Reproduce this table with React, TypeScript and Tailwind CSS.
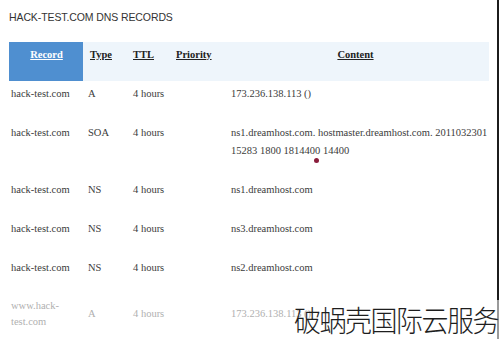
import React from 'react';

type Row = { record: string[]; type: string; ttl: string; content: string[]; faded?: boolean };

const rows: Row[] = [
    { record: ['hack-test.com'], type: 'A', ttl: '4 hours', content: ['173.236.138.113 ()'] },
    {
        record: ['hack-test.com'],
        type: 'SOA',
        ttl: '4 hours',
        content: ['ns1.dreamhost.com. hostmaster.dreamhost.com. 2011032301', '15283 1800 1814400 14400'],
    },
    { record: ['hack-test.com'], type: 'NS', ttl: '4 hours', content: ['ns1.dreamhost.com'] },
    { record: ['hack-test.com'], type: 'NS', ttl: '4 hours', content: ['ns3.dreamhost.com'] },
    { record: ['hack-test.com'], type: 'NS', ttl: '4 hours', content: ['ns2.dreamhost.com'] },
    { record: ['www.hack-', 'test.com'], type: 'A', ttl: '4 hours', content: ['173.236.138.113 ()'], faded: true },
];

const serif = { fontFamily: '"Liberation Serif", "Times New Roman", serif' };

const App = () => {
    return (
        <div className="relative w-[500px] h-[339px] overflow-hidden bg-white flex">
            <div className="flex-1 pl-[9px] pt-[10px]">
                <h1
                    className="text-[10.5px] leading-[14px] text-[#333] tracking-[-0.1px]"
                    style={{ fontFamily: '"Liberation Sans", Arial, sans-serif' }}
                >
                    HACK-TEST.COM DNS RECORDS
                </h1>
                <table className="mt-[18px] border-collapse text-[10.5px] text-[#3b3b3b]" style={serif}>
                    <thead>
                        <tr className="bg-[#eef5fb] h-[39px]">
                            <th className="w-[74px] bg-[#4f8fd0] text-white font-bold underline text-center pb-[14px] pl-[1px]">
                                Record
                            </th>
                            <th className="w-[45px] text-left font-bold underline pl-[7px] pb-[14px] text-[#222]">Type</th>
                            <th className="w-[42px] text-left font-bold underline pl-[5px] pb-[14px] text-[#222]">TTL</th>
                            <th className="w-[52px] text-left font-bold underline pl-[6px] pb-[14px] text-[#222]">Priority</th>
                            <th className="w-[267px] text-center font-bold underline pb-[14px] text-[#222]">Content</th>
                        </tr>
                    </thead>
                    <tbody>
                        {rows.map((r, i) => {
                            const cell = r.faded ? 'align-top pt-[11px]' : 'align-top pt-[4px] pb-[17px]';
                            return (
                                <tr key={i} className={r.faded ? 'text-[#b0b0b0]' : ''}>
                                    <td className={`align-top pt-[4px] pb-[17px] pl-[2px] ${r.faded ? 'leading-[16px]' : 'leading-[18px]'}`}>
                                        {r.record.map((l, j) => (
                                            <div key={j}>{l}</div>
                                        ))}
                                    </td>
                                    <td className={`pl-[5px] leading-[18px] ${cell}`}>{r.type}</td>
                                    <td className={`pl-[5px] leading-[18px] ${cell}`}>{r.ttl}</td>
                                    <td />
                                    <td className={`pl-[9px] leading-[18px] ${cell}`}>
                                        {r.content.map((l, j) => (
                                            <div key={j} className="whitespace-nowrap">{l}</div>
                                        ))}
                                    </td>
                                </tr>
                            );
                        })}
                    </tbody>
                </table>
            </div>
            <div className="w-[2px] mr-[1px] flex flex-col">
                <div className="h-[300px] bg-[#1c1c1c]" />
                <div className="flex-1 bg-[#9a9a9a]" />
            </div>

            <span className="absolute left-[314px] top-[158px] w-[5px] h-[5px] rounded-full bg-[#8a1d3c]" />
            <div
                className="absolute left-[294px] top-[302px] text-[27px] leading-[34px] text-[#1e1e1e] tracking-[-1.5px] whitespace-nowrap scale-y-[1.08] origin-top"
                style={{ fontFamily: '"Noto Sans CJK SC", sans-serif', fontWeight: 300 }}
            >
                破蜗壳国际云服务
            </div>
        </div>
    );
};

export default App;
